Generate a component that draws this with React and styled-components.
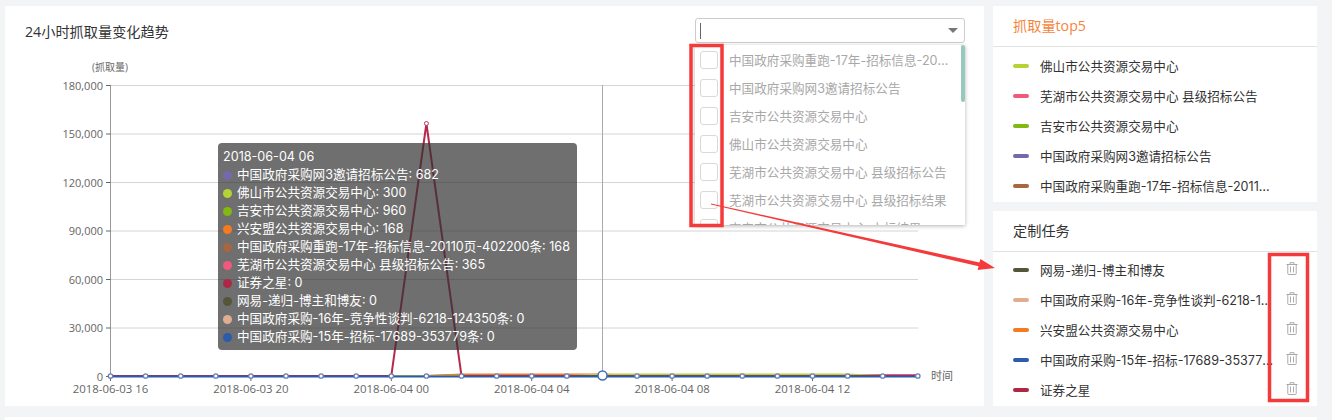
import React from 'react'
import styled, { createGlobalStyle } from 'styled-components'

const FONT = '"Open Sans", "Noto Sans CJK SC", sans-serif'
const LIST_FONT = 'Inter, "Noto Sans CJK SC", sans-serif'

const GlobalStyle = createGlobalStyle`
  html, body {
    margin: 0;
    padding: 0;
    height: 420px;
    overflow: hidden;
    background: #f3f4f6;
    font-family: ${FONT};
  }
  * { box-sizing: border-box; }
`

const top5 = [
  { color: '#b5d334', name: '佛山市公共资源交易中心' },
  { color: '#f0587c', name: '芜湖市公共资源交易中心 县级招标公告' },
  { color: '#82b80f', name: '吉安市公共资源交易中心' },
  { color: '#7569ae', name: '中国政府采购网3邀请招标公告' },
  { color: '#a8653f', name: '中国政府采购重跑-17年-招标信息-20110页-402200条' },
]

const tasks = [
  { color: '#55553a', name: '网易-递归-博主和博友' },
  { color: '#dfae90', name: '中国政府采购-16年-竞争性谈判-6218-124350条' },
  { color: '#f57a20', name: '兴安盟公共资源交易中心' },
  { color: '#2d5bab', name: '中国政府采购-15年-招标-17689-353779条' },
  { color: '#af2747', name: '证券之星' },
]

const options = [
  '中国政府采购重跑-17年-招标信息-20110页-402200条',
  '中国政府采购网3邀请招标公告',
  '吉安市公共资源交易中心',
  '佛山市公共资源交易中心',
  '芜湖市公共资源交易中心 县级招标公告',
  '芜湖市公共资源交易中心 县级招标结果',
  '吉安市公共资源交易中心 中标结果',
]

const tooltipRows = [
  { color: '#7569ae', text: '中国政府采购网3邀请招标公告: 682' },
  { color: '#b5d334', text: '佛山市公共资源交易中心: 300' },
  { color: '#82b80f', text: '吉安市公共资源交易中心: 960' },
  { color: '#f57a20', text: '兴安盟公共资源交易中心: 168' },
  { color: '#a8653f', text: '中国政府采购重跑-17年-招标信息-20110页-402200条: 168' },
  { color: '#f0587c', text: '芜湖市公共资源交易中心 县级招标公告: 365' },
  { color: '#af2747', text: '证券之星: 0' },
  { color: '#55553a', text: '网易-递归-博主和博友: 0' },
  { color: '#dfae90', text: '中国政府采购-16年-竞争性谈判-6218-124350条: 0' },
  { color: '#2d5bab', text: '中国政府采购-15年-招标-17689-353779条: 0' },
]

const yTicks = [
  { label: '180,000', y: 85.5 },
  { label: '150,000', y: 134 },
  { label: '120,000', y: 182.5 },
  { label: '90,000', y: 231 },
  { label: '60,000', y: 279.5 },
  { label: '30,000', y: 328 },
  { label: '0', y: 376.5 },
]

const xTicks = [
  { label: '2018-06-03 16', i: 0 },
  { label: '2018-06-03 20', i: 4 },
  { label: '2018-06-04 00', i: 8 },
  { label: '2018-06-04 04', i: 12 },
  { label: '2018-06-04 08', i: 16 },
  { label: '2018-06-04 12', i: 20 },
]

const px = (i) => 110.5 + i * 35.1
const hours = Array.from({ length: 24 }, (_, i) => i)
const toLine = (fn) => hours.map((i) => `${px(i)},${fn(i)}`).join(' ')

const Page = styled.div`
  position: relative;
  width: 1332px;
  height: 420px;
  overflow: hidden;
  padding: 6px 15px 0 5px;
  display: grid;
  grid-template-columns: 979px 324px;
  grid-template-rows: 400px 40px;
  column-gap: 9px;
  row-gap: 11px;
`

const ChartCard = styled.section`
  position: relative;
  background: #fff;
`

const ChartHeader = styled.header`
  height: 44px;
  padding: 12px 19px 0 20px;
  display: flex;
  justify-content: space-between;
  align-items: flex-start;
`

const ChartTitle = styled.h2`
  margin: 4px 0 0;
  font-size: 14.2px;
  line-height: 20px;
  font-weight: 400;
  color: #333;
`

const SelectBox = styled.div`
  position: relative;
  width: 270px;
  height: 25px;
  border: 1px solid #ccc;
  border-radius: 3px;
  background: #fff;
  display: flex;
  align-items: center;
  padding-left: 4px;
`

const Caret = styled.span`
  width: 1px;
  height: 16px;
  background: #666;
`

const SelectArrow = styled.span`
  margin-left: auto;
  margin-right: 6px;
  width: 0;
  height: 0;
  border-left: 5px solid transparent;
  border-right: 5px solid transparent;
  border-top: 5px solid #777;
`

const ChartSvg = styled.svg`
  display: block;
  font-family: ${FONT};
`

const Tooltip = styled.div`
  position: absolute;
  left: 213px;
  top: 137px;
  width: 359px;
  height: 207px;
  padding: 5px;
  border-radius: 4px;
  background: rgba(50, 50, 50, 0.7);
  color: #fff;
  font-family: ${LIST_FONT};
  font-size: 12.6px;
  line-height: 18px;
  white-space: nowrap;
`

const TooltipRow = styled.div`
  display: flex;
  align-items: center;
  gap: 5px;
`

const TooltipDot = styled.i`
  width: 9px;
  height: 9px;
  border-radius: 50%;
  background: ${(p) => p.$color};
`

const Dropdown = styled.div`
  position: absolute;
  left: 690px;
  top: 39px;
  width: 270px;
  height: 180px;
  overflow: hidden;
  background: #fff;
  box-shadow: 0 1px 4px rgba(0, 0, 0, 0.3);
  padding-top: 1px;
`

const Option = styled.div`
  height: 28px;
  display: flex;
  align-items: center;
  padding: 0 16px 0 5px;
  gap: 11px;
  color: #a8a8a8;
  font-family: ${LIST_FONT};
  font-size: 12.6px;
`

const CheckBox = styled.span`
  flex: none;
  width: 18px;
  height: 18px;
  border: 1px solid #d9d9d9;
  border-radius: 3px;
`

const OptionText = styled.span`
  overflow: hidden;
  white-space: nowrap;
  text-overflow: ellipsis;
  margin-bottom: 2px;
`

const ScrollThumb = styled.span`
  position: absolute;
  top: 0;
  right: 0;
  width: 4px;
  height: 57px;
  border-radius: 2px;
  background: #96c8bb;
`

const SideColumn = styled.aside`
  display: flex;
  flex-direction: column;
  gap: 9px;
`

const SideCard = styled.section`
  background: #fff;
  height: ${(p) => p.$height}px;
`

const SideHeader = styled.h3`
  margin: 0;
  height: 41px;
  padding-left: 20px;
  border-bottom: 1px solid #e2e2e2;
  font-size: 14.2px;
  line-height: 40px;
  font-weight: 400;
  color: ${(p) => p.$color};
`

const SideList = styled.ul`
  list-style: none;
  margin: 0;
  padding: ${(p) => p.$top}px 0 0 20px;
`

const SideRow = styled.li`
  height: 30px;
  display: flex;
  align-items: center;
`

const Swatch = styled.i`
  flex: none;
  width: 16px;
  height: 4px;
  border-radius: 2px;
  margin-right: 11px;
  background: ${(p) => p.$color};
`

const RowText = styled.span`
  width: 236px;
  overflow: hidden;
  white-space: nowrap;
  text-overflow: ellipsis;
  margin-bottom: 2px;
  font-family: ${LIST_FONT};
  font-size: 12.6px;
  color: #333;
`

const TrashButton = styled.svg`
  flex: none;
  margin: 0 0 4px 10px;
  color: #aaa;
`

const BottomStrip = styled.div`
  grid-column: 1 / -1;
  background: #fff;
`

const AnnotationLayer = styled.svg`
  position: absolute;
  left: 0;
  top: 0;
  pointer-events: none;
`

const TrashIcon = () => (
  <TrashButton width="12" height="13" viewBox="0 0 12 13" fill="none" stroke="currentColor" strokeWidth="1">
    <path d="M0.5 2.5h11M4 2.5V.7h4v1.8M1.8 2.5v9.2q0 .8.8.8h6.8q.8 0 .8-.8V2.5M4.5 4.5v6M7.5 4.5v6" />
  </TrashButton>
)

const Chart = () => (
  <ChartSvg width="979" height="356" viewBox="5 50 979 356">
    <text x="110" y="70.5" fontSize="10" fill="#666" textAnchor="middle">(抓取量)</text>
    {yTicks.slice(0, -1).map((t) => (
      <line key={t.label} x1="110.5" x2="918" y1={t.y} y2={t.y} stroke="#d4d4d4" />
    ))}
    <line x1="110.5" x2="110.5" y1="85" y2="377" stroke="#999" />
    {yTicks.map((t) => (
      <g key={t.label}>
        <line x1="106" x2="110.5" y1={t.y} y2={t.y} stroke="#666" />
        <text x="103" y={t.y + 4} fontSize="11" fill="#666" textAnchor="end">{t.label}</text>
      </g>
    ))}
    {xTicks.map((t) => (
      <g key={t.label}>
        <line x1={px(t.i)} x2={px(t.i)} y1="376" y2="381" stroke="#666" />
        <text x={px(t.i)} y="393" fontSize="11.4" fill="#666" textAnchor="middle">{t.label}</text>
      </g>
    ))}
    <text x="931" y="380" fontSize="11" fill="#666">时间</text>
    <line x1="602.5" x2="602.5" y1="85" y2="376" stroke="#aaa" />

    <polyline fill="none" stroke="#f0587c" strokeWidth="2" points={toLine((i) => (i > 9 ? 375 : 376))} />
    <polyline fill="none" stroke="#f57a20" strokeWidth="2" points={toLine((i) => (i > 9 && i < 15 ? 374.5 : 376))} />
    <polyline fill="none" stroke="#b5d334" strokeWidth="2" points={toLine((i) => (i > 13 && i < 22 ? 374.5 : 376))} />
    <polyline fill="none" stroke="#b52a4c" strokeWidth="2" points={toLine((i) => (i === 9 ? 123.5 : 376))} />
    <polyline fill="none" stroke="#2d5bab" strokeWidth="2" points={toLine(() => 376.5)} />
    <circle cx={px(9)} cy="123.5" r="2" fill="#fff" stroke="#c2335a" />
    {hours.map((i) => (
      <circle key={i} cx={px(i)} cy="376" r="2.2" fill="#fff" stroke="#6b7fb5" strokeWidth="1.3" />
    ))}
    <circle cx="602.5" cy="375.5" r="4.5" fill="#fff" stroke="#3f6dbb" strokeWidth="1.5" />
  </ChartSvg>
)

export default function App() {
  return (
    <Page>
      <GlobalStyle />
      <ChartCard>
        <ChartHeader>
          <ChartTitle>24小时抓取量变化趋势</ChartTitle>
          <SelectBox>
            <Caret />
            <SelectArrow />
          </SelectBox>
        </ChartHeader>
        <Chart />
        <Tooltip>
          <div>2018-06-04 06</div>
          {tooltipRows.map((r) => (
            <TooltipRow key={r.text}>
              <TooltipDot $color={r.color} />
              {r.text}
            </TooltipRow>
          ))}
        </Tooltip>
        <Dropdown>
          {options.map((o) => (
            <Option key={o}>
              <CheckBox />
              <OptionText>{o}</OptionText>
            </Option>
          ))}
          <ScrollThumb />
        </Dropdown>
      </ChartCard>

      <SideColumn>
        <SideCard $height={196}>
          <SideHeader $color="#f5853c">抓取量top5</SideHeader>
          <SideList $top={4}>
            {top5.map((r) => (
              <SideRow key={r.name}>
                <Swatch $color={r.color} />
                <RowText>{r.name}</RowText>
              </SideRow>
            ))}
          </SideList>
        </SideCard>
        <SideCard $height={195}>
          <SideHeader $color="#333">定制任务</SideHeader>
          <SideList $top={3}>
            {tasks.map((r) => (
              <SideRow key={r.name}>
                <Swatch $color={r.color} />
                <RowText>{r.name}</RowText>
                <TrashIcon />
              </SideRow>
            ))}
          </SideList>
        </SideCard>
      </SideColumn>

      <BottomStrip />

      <AnnotationLayer width="1332" height="420" viewBox="0 0 1332 420">
        <rect x="691" y="45.5" width="31" height="180" fill="none" stroke="#f43a3a" strokeWidth="3.5" />
        <rect x="1269.5" y="254.5" width="38" height="146" fill="none" stroke="#f43a3a" strokeWidth="3.5" />
        <polygon fill="#f43a3a" points="711,203.5 979.4,262.6 980.4,258.9 995,268 977.6,270 978.6,266.2 711,204.5" />
      </AnnotationLayer>
    </Page>
  )
}
